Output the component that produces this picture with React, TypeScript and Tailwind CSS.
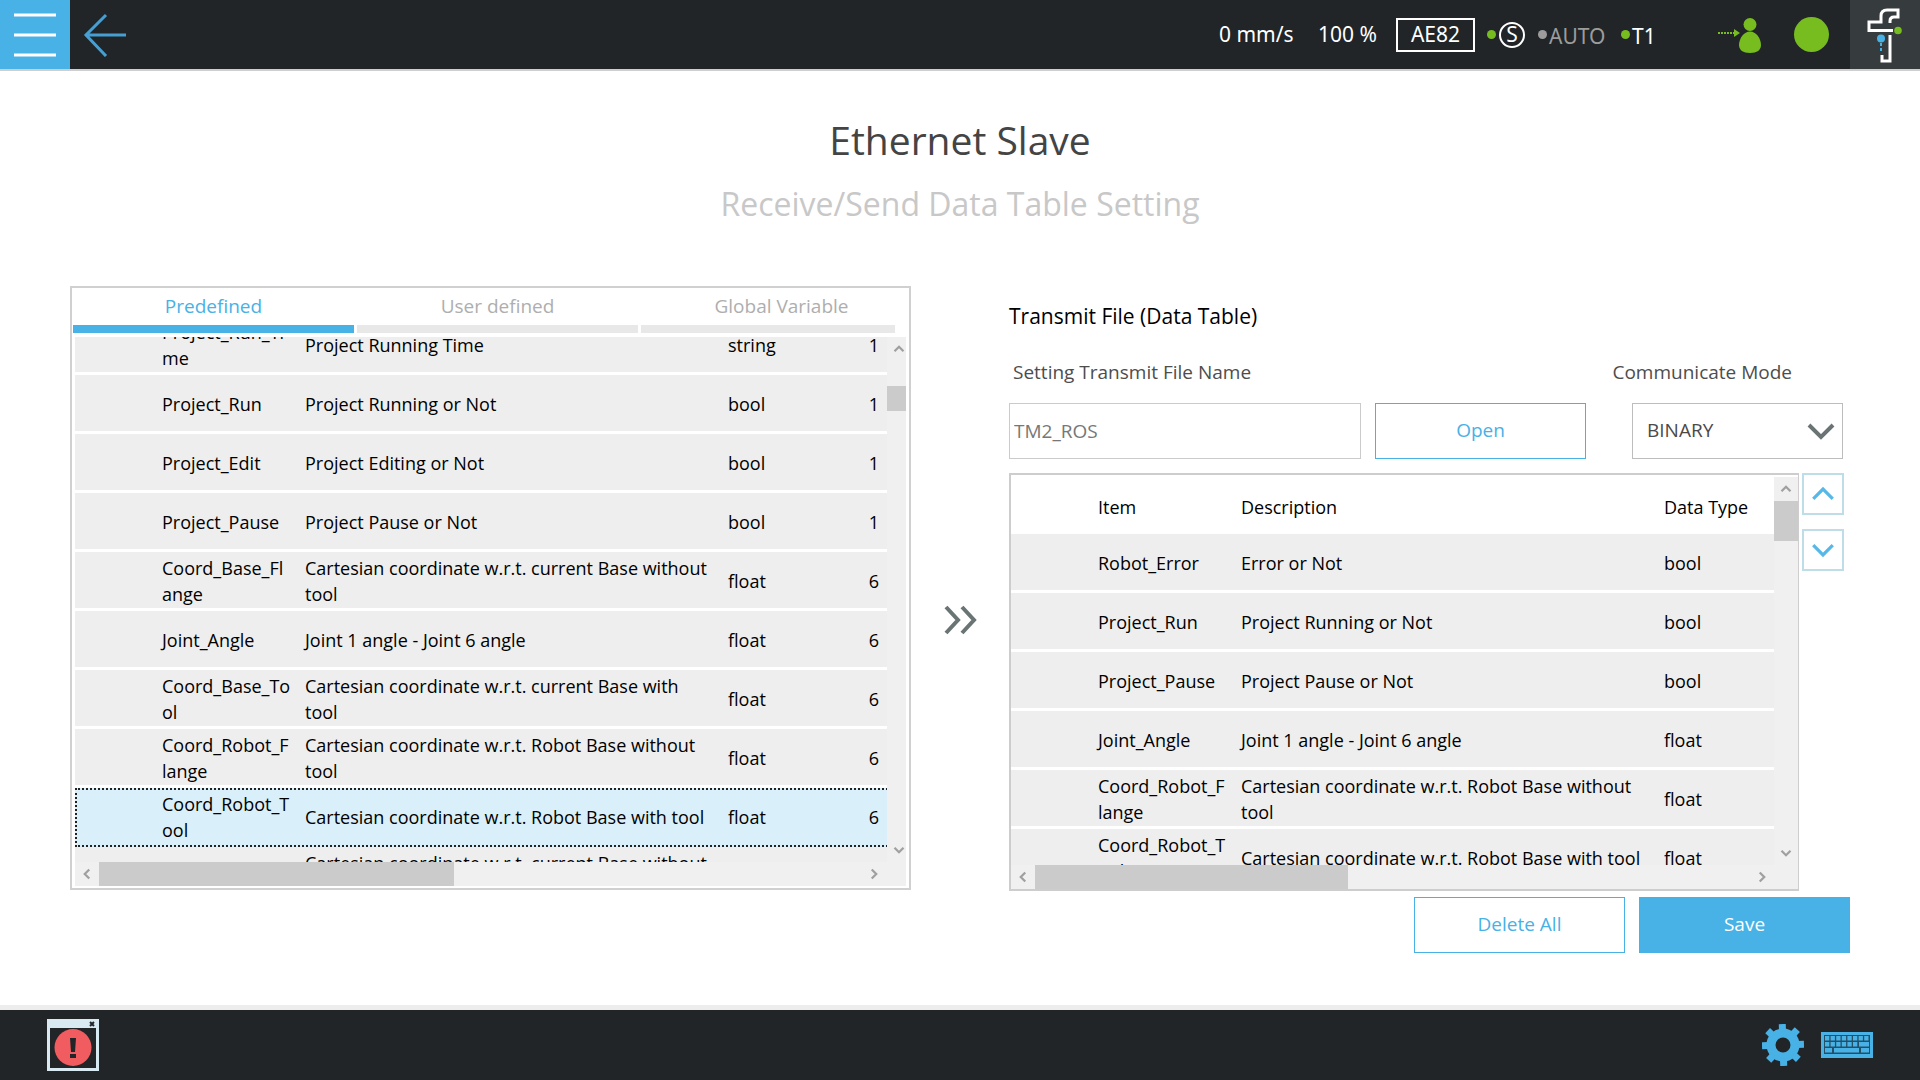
import React from "react";

type Row = { item: string; description: string; type: string; size?: string; selected?: boolean };

const PREDEFINED: Row[] = [
  { item: "Project_Run_Ti\nme", description: "Project Running Time", type: "string", size: "1" },
  { item: "Project_Run", description: "Project Running or Not", type: "bool", size: "1" },
  { item: "Project_Edit", description: "Project Editing or Not", type: "bool", size: "1" },
  { item: "Project_Pause", description: "Project Pause or Not", type: "bool", size: "1" },
  { item: "Coord_Base_Fl\nange", description: "Cartesian coordinate w.r.t. current Base without\ntool", type: "float", size: "6" },
  { item: "Joint_Angle", description: "Joint 1 angle - Joint 6 angle", type: "float", size: "6" },
  { item: "Coord_Base_To\nol", description: "Cartesian coordinate w.r.t. current Base with\ntool", type: "float", size: "6" },
  { item: "Coord_Robot_F\nlange", description: "Cartesian coordinate w.r.t. Robot Base without\ntool", type: "float", size: "6" },
  { item: "Coord_Robot_T\nool", description: "Cartesian coordinate w.r.t. Robot Base with tool", type: "float", size: "6", selected: true },
  { item: "", description: "Cartesian coordinate w.r.t. current Base without\ntool", type: "", size: "" },
];

const TRANSMIT: Row[] = [
  { item: "Robot_Error", description: "Error or Not", type: "bool" },
  { item: "Project_Run", description: "Project Running or Not", type: "bool" },
  { item: "Project_Pause", description: "Project Pause or Not", type: "bool" },
  { item: "Joint_Angle", description: "Joint 1 angle - Joint 6 angle", type: "float" },
  { item: "Coord_Robot_F\nlange", description: "Cartesian coordinate w.r.t. Robot Base without\ntool", type: "float" },
  { item: "Coord_Robot_T\nool", description: "Cartesian coordinate w.r.t. Robot Base with tool", type: "float" },
];

const TABS = [
  { label: "Predefined", active: true },
  { label: "User defined", active: false },
  { label: "Global Variable", active: false },
];

function Chevron({ dir, className, width = 2 }: { dir: "up" | "down" | "left" | "right"; className: string; width?: number }) {
  const d = {
    up: "M2 11 8 5l6 6",
    down: "M2 5l6 6 6-6",
    left: "M11 2 5 8l6 6",
    right: "M5 2l6 6-6 6",
  }[dir];
  return (
    <svg viewBox="0 0 16 16" fill="none" stroke="currentColor" strokeWidth={width} className={className} aria-hidden="true">
      <path d={d} />
    </svg>
  );
}

function ScrollButton({ dir, label }: { dir: "up" | "down" | "left" | "right"; label: string }) {
  return (
    <button type="button" aria-label={label} className="flex size-6 shrink-0 items-center justify-center text-[#a0a0a0]">
      <Chevron dir={dir} className="size-3" width={3} />
    </button>
  );
}

function Cells({ row }: { row: Row }) {
  const cell = "whitespace-pre border-b-[3px] p-0 pt-[2px] align-middle";
  const line = row.selected ? "border-transparent" : "border-white";
  return (
    <>
      <td className={`${cell} ${line}`} />
      <td className={`${cell} ${line}`}>{row.item}</td>
      <td className={`${cell} ${line}`}>{row.description}</td>
      <td className={`${cell} ${line}`}>{row.type}</td>
      {row.size !== undefined && <td className={`${cell} ${line} pr-4 text-right`}>{row.size}</td>}
    </>
  );
}

function Header() {
  return (
    <header className="flex h-[71px] items-stretch border-b-2 border-[#cfcfcf] bg-[#212528] text-[21px] text-white">
      <button type="button" aria-label="Menu" className="flex w-[70px] items-center justify-center bg-[#48b1e6]">
        <svg width="44" height="44" viewBox="0 0 44 44" stroke="#fff" strokeWidth="3" aria-hidden="true">
          <path d="M1 2h42M1 22h42M1 42h42" />
        </svg>
      </button>
      <button type="button" aria-label="Back" className="flex w-[70px] items-center justify-center">
        <svg width="44" height="44" viewBox="0 0 44 44" fill="none" stroke="#469fd2" strokeWidth="3" aria-hidden="true">
          <path d="M23 2 3 22l20 21M2 22h41" />
        </svg>
      </button>
      <div className="ml-auto flex items-center">
        <span className="w-[99px] pb-[2px]">0 mm/s</span>
        <span className="w-[78px] pb-[2px]">100 %</span>
        <span className="flex h-[34px] w-[79px] items-center justify-center border-2 border-white pb-[2px]">AE82</span>
        <span className="ml-[12px] size-[9px] rounded-full bg-[#77bd1f]" />
        <span className="ml-[3px] flex size-[26px] items-center justify-center rounded-full border-2 border-white leading-none">S</span>
        <span className="ml-[13px] size-[9px] rounded-full bg-[#9c9c9c]" />
        <span className="w-[74px] pl-[2px] pt-[3px] text-[#9c9c9c]">AUTO</span>
        <span className="size-[9px] rounded-full bg-[#77bd1f]" />
        <span className="w-[88px] pl-[2px] pt-[3px]">T1</span>
        <svg width="44" height="38" viewBox="0 0 44 38" fill="#77bd1f" aria-hidden="true">
          <path d="M0 17h16" stroke="#77bd1f" strokeWidth="2" strokeDasharray="2 1" />
          <path d="M16 13l6 4-6 4z" />
          <circle cx="32" cy="8.500" r="6.500" />
          <path d="M32 15.500c6 0 11 7 11 13.500 0 5-4 8-11 8s-11-3-11-8c0-6.500 5-13.500 11-13.500z" />
        </svg>
        <span className="ml-[32px] mr-[21px] size-[35px] rounded-full bg-[#77bd1f]" />
      </div>
      <button type="button" aria-label="Robot" className="flex w-[70px] items-center justify-center bg-[#363b3e]">
        <svg width="70" height="69" viewBox="0 0 70 69" fill="none" aria-hidden="true">
          <path
            d="M43 30.500H19v-8.500h12v-6q0-6 6-6h11v7h-4q-4 0-4 4v2M40 35v26h-8v-6"
            stroke="#fff"
            strokeWidth="3"
          />
          <circle cx="48" cy="30.500" r="3.800" fill="#77bd1f" />
          <circle cx="31" cy="38.500" r="4" fill="#48b1e6" />
          <path d="M31 43v10" stroke="#48b1e6" strokeWidth="2" strokeDasharray="3 2" />
        </svg>
      </button>
    </header>
  );
}

function PredefinedPanel() {
  return (
    <section className="flex h-[604px] flex-col border-2 border-[#d0d0d0] px-[3px] pb-[2px]">
      <div role="tablist" className="-ml-[2px] mr-[11px] grid h-[45px] grid-cols-[281fr_281fr_254fr] gap-[3px]">
        {TABS.map((t) => (
          <button
            key={t.label}
            type="button"
            role="tab"
            aria-selected={t.active}
            className={
              t.active
                ? "border-b-8 border-[#48b1e6] pb-px text-[#48b1e6]"
                : "border-b-8 border-[#e8e8e8] pb-px text-[#aeaeae] last:pl-[27px]"
            }
          >
            {t.label}
          </button>
        ))}
      </div>
      <div className="mt-[4px] flex min-h-0 flex-1">
        <div className="min-w-0 flex-1 overflow-hidden">
          <table className="-mt-[21px] w-[calc(100%+8px)] table-fixed border-separate border-spacing-0 bg-[#eeeeee] text-lg leading-[26px]">
            <colgroup>
              <col className="w-[87px]" />
              <col className="w-[143px]" />
              <col />
              <col className="w-[100px]" />
              <col className="w-[67px]" />
            </colgroup>
            <tbody>
              {PREDEFINED.map((r, i) => (
                <tr
                  key={i}
                  className={
                    r.selected
                      ? "h-[59px] bg-[#d9eff9] outline-2 -outline-offset-2 outline-dotted outline-[#222]"
                      : "h-[59px]"
                  }
                >
                  <Cells row={r} />
                </tr>
              ))}
            </tbody>
          </table>
        </div>
        <div className="flex w-[19px] flex-col items-start bg-[#f0f0f0]">
          <ScrollButton dir="up" label="Scroll up" />
          <div className="mt-[25px] h-[25px] w-full bg-[#cbcbcb]" />
          <div className="flex-1" />
          <ScrollButton dir="down" label="Scroll down" />
        </div>
      </div>
      <div className="flex h-6 bg-[#f0f0f0] pr-5">
        <ScrollButton dir="left" label="Scroll left" />
        <div className="w-[355px] bg-[#cbcbcb]" />
        <div className="flex-1" />
        <ScrollButton dir="right" label="Scroll right" />
      </div>
    </section>
  );
}

function TransmitTable() {
  return (
    <div className="flex h-[418px] min-w-0 flex-1 flex-col border-2 border-r border-[#cdcdcd]">
      <div className="flex min-h-0 flex-1">
        <div className="min-w-0 flex-1 overflow-hidden">
          <table className="w-full table-fixed border-separate border-spacing-0 bg-[#eeeeee] text-lg leading-[26px]">
            <colgroup>
              <col className="w-[87px]" />
              <col className="w-[143px]" />
              <col />
              <col className="w-[110px]" />
            </colgroup>
            <thead>
              <tr className="h-[59px] bg-white text-left">
                <th className="p-0" />
                <th className="p-0 pt-[5px] font-normal">Item</th>
                <th className="p-0 pt-[5px] font-normal">Description</th>
                <th className="p-0 pt-[5px] font-normal">Data Type</th>
              </tr>
            </thead>
            <tbody>
              {TRANSMIT.map((r) => (
                <tr key={r.item} className="h-[59px]">
                  <Cells row={r} />
                </tr>
              ))}
            </tbody>
          </table>
        </div>
        <div className="flex w-6 flex-col items-center bg-[#f0f0f0]">
          <div className="h-[2px] w-full bg-white" />
          <ScrollButton dir="up" label="Scroll up" />
          <div className="h-10 w-full bg-[#cbcbcb]" />
          <div className="flex-1" />
          <ScrollButton dir="down" label="Scroll down" />
        </div>
      </div>
      <div className="flex h-6 bg-[#f0f0f0] pr-6">
        <ScrollButton dir="left" label="Scroll left" />
        <div className="w-[313px] bg-[#cbcbcb]" />
        <div className="flex-1" />
        <ScrollButton dir="right" label="Scroll right" />
      </div>
    </div>
  );
}

function TransmitSection() {
  return (
    <section className="flex flex-col">
      <h2 className="mt-[15px] text-[21px] leading-[30px] text-black">Transmit File (Data Table)</h2>
      <div className="mt-[28px] flex justify-between text-[#4d4d4d]">
        <label htmlFor="file-name" className="pl-1">Setting Transmit File Name</label>
        <label htmlFor="mode" className="pr-[58px]">Communicate Mode</label>
      </div>
      <div className="mt-[18px] flex h-14 pr-[7px]">
        <input
          id="file-name"
          defaultValue="TM2_ROS"
          className="min-w-0 flex-1 border border-[#cbcbcb] px-1 text-[#777777] outline-none"
        />
        <button type="button" className="ml-[14px] w-[211px] border border-[#48b1e6] pb-[2px] text-[#48b1e6]">
          Open
        </button>
        <div className="relative ml-[46px] w-[211px]">
          <select
            id="mode"
            defaultValue="BINARY"
            className="size-full appearance-none border border-[#bdbdbd] bg-white pb-[2px] pl-[14px] text-[#4a4a4a] outline-none"
          >
            <option>BINARY</option>
          </select>
          <svg width="28" height="18" viewBox="0 0 28 18" fill="none" stroke="#6a7475" strokeWidth="4" className="pointer-events-none absolute right-2 top-5" aria-hidden="true">
            <path d="M2 2l12 12L26 2" />
          </svg>
        </div>
      </div>
      <div className="mt-[14px] flex pr-[6px]">
        <TransmitTable />
        <div className="ml-[3px] flex flex-col gap-[14px] text-[#57b8e8]">
          <button type="button" aria-label="Move up" className="flex size-[42px] items-center justify-center border-2 border-[#bedde8]">
            <Chevron dir="up" className="size-[26px]" width={2} />
          </button>
          <button type="button" aria-label="Move down" className="flex size-[42px] items-center justify-center border-2 border-[#bedde8]">
            <Chevron dir="down" className="size-[26px]" width={2} />
          </button>
        </div>
      </div>
      <div className="mt-[6px] flex justify-end gap-[14px]">
        <button type="button" className="h-14 w-[211px] border border-[#48b1e6] pb-[2px] text-[#48b1e6]">Delete All</button>
        <button type="button" className="h-14 w-[211px] bg-[#48b1e6] pb-[2px] text-white">Save</button>
      </div>
    </section>
  );
}

function Footer() {
  const keys = [0, 1, 2, 3, 4, 5, 6, 7];
  return (
    <footer className="flex h-[75px] items-center border-t-[5px] border-[#ededed] bg-[#212528] px-[47px]">
      <button type="button" aria-label="Error log">
        <svg width="52" height="52" viewBox="0 0 52 52" aria-hidden="true">
          <rect width="52" height="52" fill="#d8e9f2" />
          <rect x="3" y="9" width="46" height="40" fill="#212528" />
          <path d="M43 3l4 4M47 3l-4 4" stroke="#212528" strokeWidth="2" />
          <circle cx="26" cy="28.500" r="18.500" fill="#f05c5f" />
          <path d="M23 19h6l-1 14h-4zM23 35h6v4h-6z" fill="#212528" />
        </svg>
      </button>
      <button type="button" aria-label="Settings" className="ml-auto">
        <svg width="42" height="42" viewBox="-21 -21 42 42" fill="#48b1e6" aria-hidden="true">
          <circle r="12" fill="none" stroke="#48b1e6" strokeWidth="9" />
          {[0, 45, 90, 135, 180, 225, 270, 315].map((a) => (
            <path key={a} d="M-3.500-21h7v7h-7z" transform={`rotate(${a - 2})`} />
          ))}
        </svg>
      </button>
      <button type="button" aria-label="Keyboard" className="ml-[17px]">
        <svg width="52" height="26" viewBox="0 0 52 26" aria-hidden="true">
          <rect width="52" height="26" fill="#48b1e6" />
          <rect x="3" y="3" width="46" height="19" fill="#225068" />
          {keys.map((k) => (
            <g key={k} fill="#48b1e6">
              <rect x={4 + k * 5.600} y="4" width="4.300" height="4.500" />
              {k < 6 && <rect x={4 + k * 5.600} y="10" width="4.300" height="4.500" />}
            </g>
          ))}
          <path d="M38 10h10v4.500H38zM4 16h7v4.500H4zM13 16h25v4.500H13zM40 16h8v4.500h-8z" fill="#48b1e6" />
        </svg>
      </button>
    </footer>
  );
}

export default function App() {
  return (
    <div className="flex min-h-screen flex-col bg-white font-['Noto_Sans','Open_Sans',sans-serif] text-[19px] leading-[26px] text-black">
      <Header />
      <main className="flex-1 font-['Open_Sans','Noto_Sans',sans-serif]">
        <h1 className="mt-[39px] text-center text-[39px] leading-[60px] text-[#444444]">Ethernet Slave</h1>
        <p className="mt-[9px] text-center text-[32px] leading-[50px] text-[#c8c8c8]">Receive/Send Data Table Setting</p>
        <div className="mt-[57px] grid grid-cols-[minmax(0,1fr)_98px_minmax(0,1fr)] px-[70px]">
          <PredefinedPanel />
          <div className="flex h-[668px] items-center justify-center">
            <button type="button" aria-label="Add to transmit file">
              <svg width="34" height="30" viewBox="0 0 34 30" fill="none" stroke="#6a7475" strokeWidth="4" aria-hidden="true">
                <path d="M3 2l12 13L3 28M19 2l12 13-12 13" />
              </svg>
            </button>
          </div>
          <TransmitSection />
        </div>
      </main>
      <Footer />
    </div>
  );
}
